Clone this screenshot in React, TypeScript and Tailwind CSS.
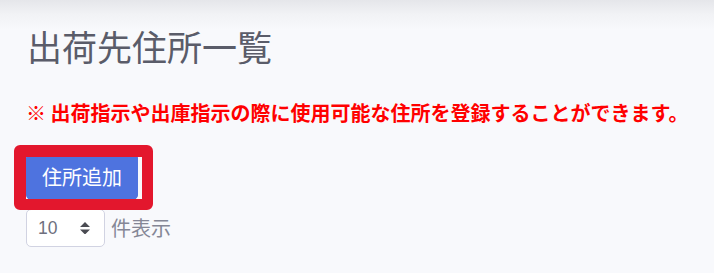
export default function App() {
  return (
    <div className="min-h-[273px] w-full bg-[linear-gradient(to_bottom,#e5e6ea_0px,#f1f2f5_14px,#f8f9fc_30px)] px-[26px] pt-[25px] font-['Noto_Sans_CJK_JP','Noto_Sans',sans-serif]">
      <h1 className="pl-[1px] text-[35px] leading-[42px] font-normal text-[#5a5c69]">出荷先住所一覧</h1>
      <p className="mt-[34px] whitespace-nowrap text-[20px] leading-[24px] font-bold text-[#ff0000]">※ 出荷指示や出庫指示の際に使用可能な住所を登録することができます。</p>
      <div className="relative mt-[28px] w-[112px]">
        <button className="h-[47px] w-[112px] rounded-[5px] border border-[#4e73df] bg-[#4e73df] text-[20px] leading-[30px] text-white">
          住所追加
        </button>
        <div className="pointer-events-none absolute left-[-12px] top-[-8px] h-[65px] w-[139px] rounded-[6px] border-[12px] border-r-[11px] border-b-[11px] border-[#e3172d]" />
      </div>
      <div className="mt-[9px] flex items-center">
        <div className="flex h-[38px] w-[79px] items-center justify-between rounded-[5px] border border-[#d1d3e2] bg-white pl-[11px] pr-[14px] text-[17.5px] text-[#6e707e]">
          <span className="font-['Liberation_Sans','Noto_Sans',sans-serif]">10</span>
          <svg width="10" height="12.5" viewBox="0 0 4 5" className="shrink-0">
            <path d="M2 0L0 2h4zm0 5L0 3h4z" fill="#4a4b52" />
          </svg>
        </div>
        <span className="ml-[6px] text-[20px] leading-[30px] text-[#858796]">件表示</span>
      </div>
    </div>
  );
}
